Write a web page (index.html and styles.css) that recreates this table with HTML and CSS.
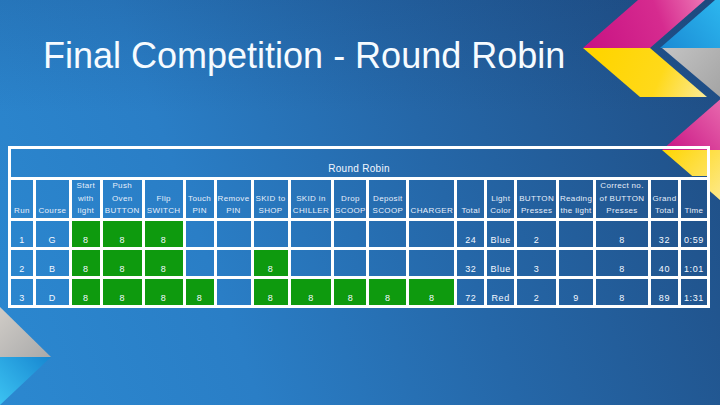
FILE: index.html
```html
<!DOCTYPE html>
<html lang="en">
<head>
<meta charset="utf-8">
<title>Final Competition - Round Robin</title>
<link rel="stylesheet" href="styles.css">
</head>
<body>
<div class="slide">
  <svg class="deco" width="720" height="405" viewBox="0 0 720 405" aria-hidden="true">
    <defs>
      <linearGradient id="pink" gradientUnits="userSpaceOnUse" x1="585" y1="48" x2="710" y2="0">
        <stop offset="0" stop-color="#c81283"/>
        <stop offset="0.6" stop-color="#d62b8f"/>
        <stop offset="1" stop-color="#ef7db8"/>
      </linearGradient>
      <linearGradient id="pink2" gradientUnits="userSpaceOnUse" x1="662" y1="150" x2="720" y2="100">
        <stop offset="0" stop-color="#c81283"/>
        <stop offset="1" stop-color="#e868ad"/>
      </linearGradient>
      <linearGradient id="yel" gradientUnits="userSpaceOnUse" x1="600" y1="50" x2="710" y2="97">
        <stop offset="0" stop-color="#ffd500"/>
        <stop offset="0.55" stop-color="#ffd91a"/>
        <stop offset="1" stop-color="#fbeca0"/>
      </linearGradient>
      <linearGradient id="yel2" gradientUnits="userSpaceOnUse" x1="662" y1="150" x2="720" y2="200">
        <stop offset="0" stop-color="#ffd500"/>
        <stop offset="1" stop-color="#fde98a"/>
      </linearGradient>
      <linearGradient id="blu" gradientUnits="userSpaceOnUse" x1="660" y1="48" x2="720" y2="0">
        <stop offset="0" stop-color="#1a8ad4"/>
        <stop offset="1" stop-color="#2cb6ee"/>
      </linearGradient>
      <linearGradient id="gry" gradientUnits="userSpaceOnUse" x1="662" y1="48" x2="720" y2="97">
        <stop offset="0" stop-color="#c4c4c4"/>
        <stop offset="1" stop-color="#a4a4a4"/>
      </linearGradient>
      <linearGradient id="gry2" gradientUnits="userSpaceOnUse" x1="0" y1="310" x2="51" y2="357">
        <stop offset="0" stop-color="#cfcbc6"/>
        <stop offset="1" stop-color="#a9a9a9"/>
      </linearGradient>
      <linearGradient id="blu2" gradientUnits="userSpaceOnUse" x1="51" y1="357" x2="0" y2="405">
        <stop offset="0" stop-color="#1786d0"/>
        <stop offset="1" stop-color="#3cc3f2"/>
      </linearGradient>
    </defs>
    <polygon points="583,48 650,48 705,0 638,0" fill="url(#pink)"/>
    <polygon points="660,48 720,48 720,0 715,0" fill="url(#blu)"/>
    <polygon points="583,48 650,48 707,97 640,97" fill="url(#yel)"/>
    <polygon points="662,48 720,48 720,97" fill="url(#gry)"/>
    <polygon points="662,150 720,99.5 720,150" fill="url(#pink2)"/>
    <polygon points="662,150 720,150 720,200 710,191.3 710,176 692.2,176" fill="url(#yel2)"/>
    <polygon points="0,307 51,357 0,357" fill="url(#gry2)"/>
    <polygon points="0,357 51,357 0,405" fill="url(#blu2)"/>
  </svg>

  <div class="content">
    <h1 class="title">Final Competition - Round Robin</h1>
    <table class="rr">
      <colgroup>
        <col class="c-run"><col class="c-course"><col class="c-start"><col class="c-push"><col class="c-flip">
        <col class="c-touch"><col class="c-remove"><col class="c-shop"><col class="c-chiller"><col class="c-drop">
        <col class="c-deposit"><col class="c-charger"><col class="c-total"><col class="c-light"><col class="c-presses">
        <col class="c-reading"><col class="c-correct"><col class="c-grand"><col class="c-time">
      </colgroup>
      <tr class="cap">
        <td colspan="19">Round Robin</td>
      </tr>
      <tr class="head">
        <th>Run</th>
        <th>Course</th>
        <th>Start<br>with<br>light</th>
        <th>Push<br>Oven<br>BUTTON</th>
        <th>Flip<br>SWITCH</th>
        <th>Touch<br>PIN</th>
        <th>Remove<br>PIN</th>
        <th>SKID to<br>SHOP</th>
        <th>SKID in<br>CHILLER</th>
        <th>Drop<br>SCOOP</th>
        <th>Deposit<br>SCOOP</th>
        <th>CHARGER</th>
        <th>Total</th>
        <th>Light<br>Color</th>
        <th>BUTTON<br>Presses</th>
        <th>Reading<br>the light</th>
        <th>Correct no.<br>of BUTTON<br>Presses</th>
        <th>Grand<br>Total</th>
        <th>Time</th>
      </tr>
      <tr class="row">
        <td>1</td><td>G</td><td class="g">8</td><td class="g">8</td><td class="g">8</td>
        <td></td><td></td><td></td><td></td><td></td>
        <td></td><td></td><td>24</td><td>Blue</td><td>2</td>
        <td></td><td>8</td><td>32</td><td>0:59</td>
      </tr>
      <tr class="row">
        <td>2</td><td>B</td><td class="g">8</td><td class="g">8</td><td class="g">8</td>
        <td></td><td></td><td class="g">8</td><td></td><td></td>
        <td></td><td></td><td>32</td><td>Blue</td><td>3</td>
        <td></td><td>8</td><td>40</td><td>1:01</td>
      </tr>
      <tr class="row">
        <td>3</td><td>D</td><td class="g">8</td><td class="g">8</td><td class="g">8</td>
        <td class="g">8</td><td></td><td class="g">8</td><td class="g">8</td><td class="g">8</td>
        <td class="g">8</td><td class="g">8</td><td>72</td><td>Red</td><td>2</td>
        <td>9</td><td>8</td><td>89</td><td>1:31</td>
      </tr>
    </table>
  </div>
</div>
</body>
</html>
```
FILE: styles.css
```css
html, body {
  margin: 0;
  padding: 0;
}

body {
  width: 720px;
  height: 405px;
  overflow: hidden;
}

.slide {
  position: relative;
  width: 720px;
  height: 405px;
  overflow: hidden;
  font-family: "Liberation Sans", Arial, sans-serif;
  color: #ffffff;
  background:
    linear-gradient(180deg, rgba(18, 50, 100, 0.16) 0%, rgba(18, 50, 100, 0) 28%),
    linear-gradient(70deg, #2b88d0 0%, #2a7ec6 30%, #2567a8 60%, #1f4c82 100%);
}

.deco {
  position: absolute;
  left: 0;
  top: 0;
}

.content {
  position: relative;
  padding: 36px 10px 0 8px;
}

.title {
  margin: 0 0 0 35px;
  font-size: 36px;
  font-weight: normal;
  line-height: 40px;
  color: #f6fbff;
  white-space: nowrap;
}

.rr {
  margin-top: 70px;
  border-collapse: collapse;
  table-layout: fixed;
  border: 3px solid #ffffff;
}

.rr td,
.rr th {
  border: 3px solid #ffffff;
  padding: 0;
  text-align: center;
  vertical-align: bottom;
  white-space: nowrap;
  overflow: hidden;
}

.c-run { width: 25px; }
.c-course { width: 36px; }
.c-start { width: 31px; }
.c-push { width: 42px; }
.c-flip { width: 41px; }
.c-touch { width: 31px; }
.c-remove { width: 37px; }
.c-shop { width: 37px; }
.c-chiller { width: 44px; }
.c-drop { width: 35px; }
.c-deposit { width: 40px; }
.c-charger { width: 48px; }
.c-total { width: 30px; }
.c-light { width: 30px; }
.c-presses { width: 42px; }
.c-reading { width: 37px; }
.c-correct { width: 55px; }
.c-grand { width: 30px; }
.c-time { width: 29px; }

.cap td {
  height: 26px;
  font-size: 10px;
  letter-spacing: 0.3px;
  line-height: 12px;
  padding-bottom: 2px;
  color: #f2f7ff;
}

.head th {
  height: 36px;
  font-size: 8px;
  font-weight: normal;
  letter-spacing: 0.35px;
  line-height: 12.5px;
  color: #e6eefa;
}

.row td {
  height: 25px;
  font-size: 9px;
  letter-spacing: 0.6px;
  line-height: 11px;
  padding-bottom: 1px;
  color: #f4f8ff;
}

.row td.g {
  background: #0e9a0e;
}
```
